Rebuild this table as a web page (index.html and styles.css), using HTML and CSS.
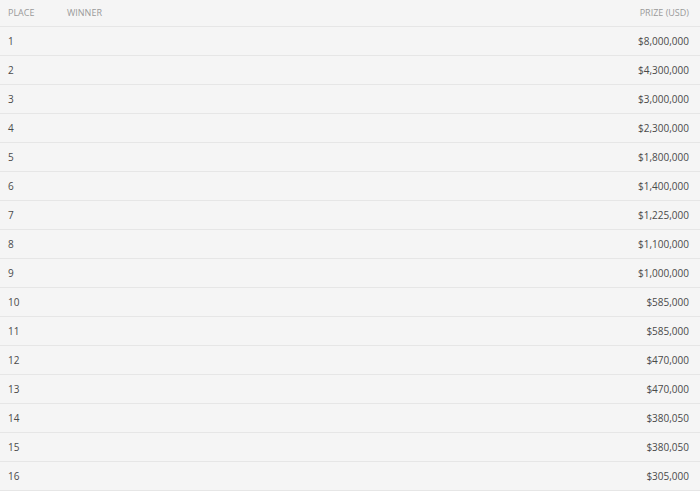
FILE: index.html
```html
<!DOCTYPE html>
<html>
<head>
  <title>Payouts</title>
  <meta name="viewport" content="width=device-width, initial-scale=1.0">
  <link rel="stylesheet" href="styles.css">
</head>
<body>
  <table class="payouts">
    <thead>
      <tr>
        <th class="place">Place</th>
        <th class="winner">Winner</th>
        <th class="prize">Prize (USD)</th>
      </tr>
    </thead>
    <tbody>
      <tr><td class="place">1</td><td class="winner"></td><td class="prize">$8,000,000</td></tr>
      <tr><td class="place">2</td><td class="winner"></td><td class="prize">$4,300,000</td></tr>
      <tr><td class="place">3</td><td class="winner"></td><td class="prize">$3,000,000</td></tr>
      <tr><td class="place">4</td><td class="winner"></td><td class="prize">$2,300,000</td></tr>
      <tr><td class="place">5</td><td class="winner"></td><td class="prize">$1,800,000</td></tr>
      <tr><td class="place">6</td><td class="winner"></td><td class="prize">$1,400,000</td></tr>
      <tr><td class="place">7</td><td class="winner"></td><td class="prize">$1,225,000</td></tr>
      <tr><td class="place">8</td><td class="winner"></td><td class="prize">$1,100,000</td></tr>
      <tr><td class="place">9</td><td class="winner"></td><td class="prize">$1,000,000</td></tr>
      <tr><td class="place">10</td><td class="winner"></td><td class="prize">$585,000</td></tr>
      <tr><td class="place">11</td><td class="winner"></td><td class="prize">$585,000</td></tr>
      <tr><td class="place">12</td><td class="winner"></td><td class="prize">$470,000</td></tr>
      <tr><td class="place">13</td><td class="winner"></td><td class="prize">$470,000</td></tr>
      <tr><td class="place">14</td><td class="winner"></td><td class="prize">$380,050</td></tr>
      <tr><td class="place">15</td><td class="winner"></td><td class="prize">$380,050</td></tr>
      <tr><td class="place">16</td><td class="winner"></td><td class="prize">$305,000</td></tr>
    </tbody>
  </table>
</body>
</html>
```

FILE: styles.css
```css
* {
  margin: 0;
  padding: 0;
  box-sizing: border-box;
}

body {
  font-family: "Open Sans", "Liberation Sans", sans-serif;
  background: #f5f5f5;
  color: #4a4a4a;
}

.payouts {
  width: 100%;
  border-collapse: collapse;
}

.payouts th {
  font-size: 9px;
  font-weight: 400;
  text-transform: uppercase;
  color: #9a9a9a;
  height: 26px;
  vertical-align: middle;
  padding: 0 8px 0;
  text-align: left;
  border-bottom: 1px solid #e6e6e6;
}

.payouts td {
  font-size: 10px;
  height: 29px;
  padding: 0 8px;
  vertical-align: middle;
  border-bottom: 1px solid #e6e6e6;
}

.payouts .place {
  width: 59px;
}

.payouts .prize {
  text-align: right;
  padding-right: 11px;
}
```
